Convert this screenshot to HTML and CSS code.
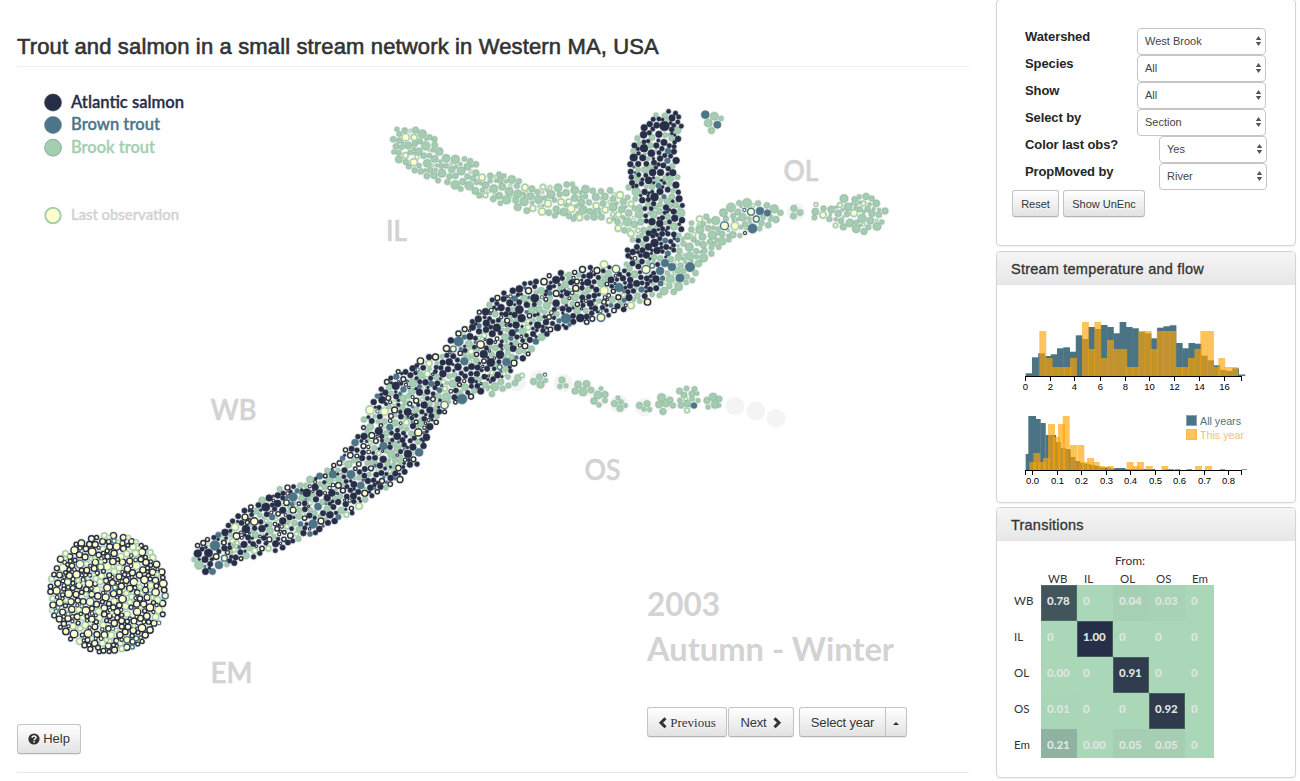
FILE: index.html
```html
<!DOCTYPE html>
<html lang="en">
<head>
<meta charset="utf-8">
<title>Trout and salmon in a small stream network</title>
<link rel="stylesheet" href="styles.css">
</head>
<body>
<div class="page">
  <main class="main">
    <h1 class="title"><span>Trout and salmon in a small stream network in Western MA, USA</span></h1>
    <svg class="network" id="network" viewBox="17 67 952 640" width="952" height="640">
      <g id="sections" class="sections"></g>
      <g id="dots"></g>
      <g class="legend">
        <circle cx="53" cy="102.5" r="8.5" fill="#262f47" stroke="#3b4152" stroke-width=".6"/>
        <circle cx="53" cy="125" r="8.5" fill="#4b7688" stroke="#63818d" stroke-width=".6"/>
        <circle cx="53" cy="147.7" r="8.4" fill="#a3cfb0" stroke="#7f9d8a" stroke-width=".8"/>
        <circle cx="53" cy="215.5" r="7.7" fill="#ffffcc" stroke="#a3cfb0" stroke-width="2"/>
        <text class="key" x="71" y="107.5" textLength="113" lengthAdjust="spacingAndGlyphs" fill="#262f47" stroke="#262f47">Atlantic salmon</text>
        <text class="key" x="71" y="130" textLength="89" lengthAdjust="spacingAndGlyphs" fill="#4b7688" stroke="#4b7688">Brown trout</text>
        <text class="key" x="71" y="152.5" textLength="84" lengthAdjust="spacingAndGlyphs" fill="#a3cfb0" stroke="#a3cfb0">Brook trout</text>
        <text class="key last" x="71" y="220" textLength="108" lengthAdjust="spacingAndGlyphs" stroke="#d3d3d3">Last observation</text>
      </g>
      <g class="river">
        <text x="386" y="241" textLength="21" lengthAdjust="spacingAndGlyphs">IL</text>
        <text x="783.500" y="181" textLength="35" lengthAdjust="spacingAndGlyphs">OL</text>
        <text x="210.500" y="420" textLength="46" lengthAdjust="spacingAndGlyphs">WB</text>
        <text x="584.5" y="480" textLength="36" lengthAdjust="spacingAndGlyphs">OS</text>
        <text x="210.500" y="683" textLength="42" lengthAdjust="spacingAndGlyphs">EM</text>
      </g>
      <g class="season">
        <text x="647" y="616" textLength="73" lengthAdjust="spacingAndGlyphs">2003</text>
        <text x="647" y="661" textLength="247" lengthAdjust="spacingAndGlyphs">Autumn - Winter</text>
      </g>
    </svg>
    <div class="controls">
      <button class="btn help"><svg width="12" height="12" viewBox="0 0 12 12"><circle cx="6" cy="6" r="5.6" fill="#333"/><path d="M4.100 4.700C4.100 2.400 8 2.400 8 4.600C8 6 6.100 5.800 6.100 7.200M6.100 8.100V9.600" fill="none" stroke="#f6f6f6" stroke-width="1.500"/></svg>Help</button>
      <div class="nav">
        <button class="btn prev"><svg width="9" height="12" viewBox="0 0 9 12"><path d="M7.500 1.200L3 5.700L7.500 10.200" fill="none" stroke="#333" stroke-width="3"/></svg>Previous</button>
        <button class="btn next">Next<svg width="9" height="12" viewBox="0 0 9 12"><path d="M1.500 1.200L6 5.700L1.500 10.200" fill="none" stroke="#333" stroke-width="3"/></svg></button>
        <div class="group"><button class="btn year">Select year</button><button class="btn caret"><i></i></button></div>
      </div>
    </div>
    <hr class="rule">
  </main>
  <aside class="side">
    <section class="panel filters">
      <div class="row"><label>Watershed</label><div class="select">West Brook<svg width="7" height="10" viewBox="0 0 7 10"><path d="M3.500 0L6.200 4H.8zM3.500 10L6.200 6H.8z"/></svg></div></div>
      <div class="row"><label>Species</label><div class="select">All<svg width="7" height="10" viewBox="0 0 7 10"><path d="M3.500 0L6.200 4H.8zM3.500 10L6.200 6H.8z"/></svg></div></div>
      <div class="row"><label>Show</label><div class="select">All<svg width="7" height="10" viewBox="0 0 7 10"><path d="M3.500 0L6.200 4H.8zM3.500 10L6.200 6H.8z"/></svg></div></div>
      <div class="row"><label>Select by</label><div class="select">Section<svg width="7" height="10" viewBox="0 0 7 10"><path d="M3.500 0L6.200 4H.8zM3.500 10L6.200 6H.8z"/></svg></div></div>
      <div class="row"><label>Color last obs?</label><div class="select narrow">Yes<svg width="7" height="10" viewBox="0 0 7 10"><path d="M3.500 0L6.200 4H.8zM3.500 10L6.200 6H.8z"/></svg></div></div>
      <div class="row"><label>PropMoved by</label><div class="select narrow">River<svg width="7" height="10" viewBox="0 0 7 10"><path d="M3.500 0L6.200 4H.8zM3.500 10L6.200 6H.8z"/></svg></div></div>
      <div class="actions"><button class="btn small reset">Reset</button><button class="btn small unenc">Show UnEnc</button></div>
    </section>
    <section class="panel flow">
      <h2 class="head">Stream temperature and flow</h2>
      <svg id="hist" class="hist" width="298" height="217" viewBox="997 285 298 217">
        <g id="bars"></g>
        <g id="axes" class="axes"></g>
        <rect x="1186.500" y="415.500" width="10" height="10" fill="#4a7384" stroke="#8aa5af"/>
        <rect x="1186.500" y="429.500" width="10" height="10" fill="#fdc45c" stroke="#f5b94c"/>
        <text class="hkey" x="1200" y="425" textLength="41" lengthAdjust="spacingAndGlyphs" fill="#4a7384">All years</text>
        <text class="hkey" x="1200" y="439" textLength="44" lengthAdjust="spacingAndGlyphs" fill="#fbc069">This year</text>
      </svg>
    </section>
    <section class="panel trans">
      <h2 class="head">Transitions</h2>
      <div class="from">From:</div>
      <div class="matrix" id="matrix"></div>
    </section>
  </aside>
</div>
<script src="main.js"></script>
</body>
</html>
```
FILE: styles.css
```css
* { box-sizing: border-box; }
body { margin: 0; background: #fff; color: #333; font: 13px/18px "Liberation Sans", Arial, sans-serif; overflow: hidden; }
.page { display: flex; width: 1300px; height: 781px; padding-left: 17px; overflow: hidden; }
.main { width: 952px; margin-right: 27px; }
.title { margin: 0; height: 67px; padding-top: 32px; border-bottom: 1px solid #eee; font-size: 22px; line-height: 30px; font-weight: 400; -webkit-text-stroke: .6px #333; white-space: nowrap; letter-spacing: .14px; }
.network { display: block; overflow: visible; }
.sections { fill: #f4f4f4; }
.network text { font-family: Lato, sans-serif; }
.network .key { font-size: 16.500px; font-weight: 600; stroke-width: .3px; }
.network .last { font-size: 15px; fill: #d3d3d3; }
.river text { font-size: 29.500px; font-weight: 600; fill: #d3d3d3; stroke: #d3d3d3; stroke-width: .5px; }
.season text { font-size: 33px; font-weight: 700; fill: #d3d3d3; }
.controls { display: flex; justify-content: space-between; height: 65px; }
.btn { display: inline-flex; align-items: center; justify-content: center; height: 30px; padding: 0; border: 1px solid #c4c4c4; border-bottom-color: #b3b3b3; border-radius: 3px; background: linear-gradient(#fff, #e2e2e2); box-shadow: 0 1px 1px rgba(0,0,0,.08); color: #333; font: 13px/18px "Liberation Sans", Arial, sans-serif; text-shadow: 0 1px 1px rgba(255,255,255,.75); white-space: nowrap; }
.help { width: 64px; margin-top: 17px; gap: 3px; }
.nav { display: flex; width: 322px; }
.prev { width: 80px; gap: 3px; font-family: "Liberation Serif", serif; padding-top: 1px; }
.next { width: 66px; margin-left: 1px; gap: 6px; }
.nav .next, .nav .year { padding-top: 1px; letter-spacing: -.15px; }
.group { display: flex; margin-left: 5px; }
.year { width: 87px; border-radius: 3px 0 0 3px; }
.caret { width: 22px; margin-left: -1px; border-radius: 0 3px 3px 0; }
.caret i { border: 3px solid transparent; border-top: 0; border-bottom-color: #333; margin-top: 2px; }
.rule { height: 1px; margin: 0; border: 0; background: #e8e8e8; }
.side { width: 300px; }
.panel { border: 1px solid #d4d4d4; border-radius: 4px; box-shadow: 0 1px 2px rgba(0,0,0,.06); overflow: hidden; }
.filters { height: 247px; margin-top: -1px; padding: 28px 29px 0 28px; }
.row { display: flex; justify-content: space-between; height: 27px; }
.row label { font-weight: 700; line-height: 18px; color: #262626; letter-spacing: -.1px; }
.select { position: relative; display: flex; align-items: center; justify-content: space-between; width: 129px; height: 27px; padding: 0 3px 1px 7px; border: 1px solid #c6c6c6; border-radius: 4px; background: #fff; font-size: 11px; color: #444; }
.narrow { width: 108px; left: 1px; }
.select svg { fill: #555; }
.actions { display: flex; gap: 4px; margin: 0 0 0 -13px; }
.small { height: 27px; font-size: 11px; }
.reset { width: 47px; }
.unenc { width: 82px; }
.flow { height: 252px; margin-top: 5px; }
.head { margin: 0; height: 33px; padding-left: 14px; background: linear-gradient(#f5f5f5, #e7e7e7); border-bottom: 1px solid #e4e4e4; font-size: 14.500px; line-height: 34px; font-weight: 400; -webkit-text-stroke: .3px #333; letter-spacing: .22px; }
.hist { display: block; }
.axes path { fill: none; stroke: #000; shape-rendering: crispEdges; }
.axes text { font: 9.500px "Liberation Sans", Arial, sans-serif; text-anchor: middle; fill: #000; }
.hkey { font: 11px "Liberation Sans", Arial, sans-serif; }
.trans { height: 271px; margin-top: 4px; font-family: Lato, sans-serif; }
.trans .head { font-family: "Liberation Sans", Arial, sans-serif; }
.from { margin: 12px 0 0 118px; height: 16px; line-height: 16px; font-size: 12px; }
.matrix { display: grid; grid-template: 16px repeat(4, 36px) 29px / 27px repeat(4, 36px) 29px; margin-left: 17px; font-size: 11.500px; }
.matrix span { color: #333; white-space: nowrap; }
.colhead { padding-left: 7px; line-height: 19px; }
.rowhead { line-height: 32px; }
.cell { padding-left: 6px; line-height: 32px; font-weight: 900; font-size: 11.500px; }
.matrix .cell { color: #dfe5e0; }
.dark { box-shadow: inset 0 0 0 1px rgba(90,120,110,.6); }
```
FILE: main.js
```js
const NS = 'http://www.w3.org/2000/svg';
function el(parent, name, attrs, text) {
  const e = document.createElementNS(NS, name);
  for (const k in attrs) e.setAttribute(k, attrs[k]);
  if (text !== undefined) e.textContent = text;
  parent.appendChild(e);
  return e;
}
let seed = 20031;
function rnd() {
  seed = (seed + 0x6D2B79F5) | 0;
  let t = Math.imul(seed ^ (seed >>> 15), 1 | seed);
  t = (t + Math.imul(t ^ (t >>> 7), 61 | t)) ^ t;
  return ((t ^ (t >>> 14)) >>> 0) / 4294967296;
}
const COLORS = { s: '#262f47', b: '#4b7688', g: '#a3cfb0' };
const EDGE = { s: '#262f47', b: '#44697a', g: '#86b295' };
const placed = [];
const grid = {};
function clash(x, y, r, slack) {
  const cx = Math.floor(x / 12), cy = Math.floor(y / 12);
  for (let i = cx - 1; i <= cx + 1; i++) for (let j = cy - 1; j <= cy + 1; j++) {
    for (const c of grid[i + ',' + j] || []) {
      if (Math.hypot(c.x - x, c.y - y) < c.r + r - slack) return true;
    }
  }
  return false;
}
function add(x, y, r, kind, last) {
  const c = { x, y, r, kind, last };
  placed.push(c);
  const k = Math.floor(x / 12) + ',' + Math.floor(y / 12);
  (grid[k] = grid[k] || []).push(c);
}
function inside(p, x, y) {
  let hit = false;
  for (let i = 0, j = p.length - 1; i < p.length; j = i++) {
    const [a, b] = p[i], [c, d] = p[j];
    if ((b > y) !== (d > y) && x < (c - a) * (y - b) / (d - b) + a) hit = !hit;
  }
  return hit;
}
function edge(p, x, y) {
  let m = 99;
  for (let i = 0, j = p.length - 1; i < p.length; j = i++) {
    const [a, b] = p[i], [c, d] = p[j];
    const t = Math.max(0, Math.min(1, ((x - a) * (c - a) + (y - b) * (d - b)) / ((c - a) ** 2 + (d - b) ** 2)));
    m = Math.min(m, Math.hypot(x - a - t * (c - a), y - b - t * (d - b)));
  }
  return m;
}
// Fills an outline with packed fish, largest first; the smallest stay off the rim.
function pack(outline, passes, pick, slack) {
  const xs = outline.map(p => p[0]), ys = outline.map(p => p[1]);
  const x0 = Math.min(...xs), y0 = Math.min(...ys), w = Math.max(...xs) - x0, h = Math.max(...ys) - y0;
  for (const [r0, density] of passes) {
    const n = w * h * density;
    for (let i = 0; i < n; i++) {
      const x = x0 + rnd() * w, y = y0 + rnd() * h, r = r0 + (rnd() - .5) * .4;
      if (!inside(outline, x, y) || edge(outline, x, y) < (r < 2.250 ? 4.5 : r - .9) || clash(x, y, r, slack)) continue;
      const [kind, last] = pick(x, y, r);
      add(x, y, r, kind, last);
    }
  }
}

// Individually placed fish: x, y, radius, species, last observation
`705.3,114.7,4,b 714.3,116.3,4,g 721,118.5,2.4,g 708.3,123,4,g 717.3,124.7,3.700,b 711.5,130.5,3.2,g
794,208.500,3.2,g 800,212.500,3,g 793.500,216,3,g
724.5,225.700,4.5,b,1 751,211.700,4,b,1 760,211,4,b 767.500,213,3.300,b 756.300,219,3.500,b,1 752.500,228.500,4.700,b 745,233,1.900,s,1 744.300,210,2,b,1 747,203,4.500,g 731,207.500,4.5,g
823,215,3.5,g,1 835.500,225.500,2.500,g,1 840,205,2.800,g,1 854,213,3.800,g,1 863.500,203.500,2.800,g,1 816,204.500,2.300,g,1 844,198.500,4,g 866,196.500,3.300,g 848,207,4,g 877,226.500,4,g 850,223,4,g 885,211,3.200,g 864,231.500,3.200,g
690,267,4.800,b 680,278,4.200,b 672,267,4,b 665,263,4,b 664.500,126,5,s 668,151,3,b
646,269.500,4.500,b,1 604,264.500,4,g,1 582.500,269.500,3.500,s,1 597,270.500,3.500,s,1 604,290.500,4.500,g,1 566,318.500,5,b 601,317.500,4.300,b,1 647.500,302,3.700,s,1 544,281.700,3.700,s,1 619,287.500,4.500,b 631,305.500,3.700,g,1 616,269,4.200,b,1
458.500,341.500,4.800,b 446.500,348.500,3.600,s,1 420.500,361,3.700,s,1 435.500,357,3.600,s,1 429,363.500,3.500,g,1 444.500,405,4.200,b,1 462,399,5,b 471,396.500,3,s,1 370,410,4.500,g,1 384.500,411.500,4.200,g,1 514,363,3.500,s,1
215,545.500,5,b 208.500,553,4.200,s 199,565,4.300,g 219,565,4,b 205.500,571.500,3.300,s 212.500,571.500,3.200,b 293,497,4.500,b 351,474.500,4.200,b 313,524,4.500,b 236.500,536,3.800,s,1 321,521,3.500,s,1 235,527,4,g,1 400,479.500,3.500,s,1 359,506,3.700,g,1
482,177.500,3.700,g,1 525,187.500,3.700,g,1 543,187,3,g,1 548,203.500,3.800,g,1 561,202,3.500,g,1 542,211.500,3.800,g,1 620,195,3.800,g,1 631,204,3,g,1 631,233.500,3.500,g,1
391.500,454,4,g 518,378,3.400,g 522,375.500,2.600,g,1 515,383,3,g 508,377,2.400,g
533.500,381.500,3.200,g 539.500,377,3.200,g 540.500,384.500,3.700,g 545.500,380.500,2.200,g 545,374.700,2,b,1
562,380,3.200,g 560,386.300,2.400,g 566,385.700,2.200,g
578,384.500,3.500,g 586.500,384,3.500,g 575,391,3.200,g 583,391.500,4.200,g 591,390,3,g 598,395,4,g 601,388.500,2,g 605,394.500,3.200,g 594,401,3.300,g 599,405,2.300,g 605,400.500,2.500,g
618,398,2.200,g 614.500,403.500,3.200,g 621,402,2.500,g 620,408.300,3.300,g 625.500,405.500,2.100,g
639.500,405.500,3.200,g 647,403.700,3.200,g 644,409.300,2.200,g 649.500,409.500,2.300,g
661.500,397.500,4,g 659,404.500,3.500,g 666,403,4,g 670,400,3,g 673,405.500,2.700,g 663,411.500,3.200,g
679.500,391,3,g 686.500,388.500,2.500,g 694.500,389,2.600,g 684,395,3,g 692,394,3,g 697,393.500,2,g 680,400.500,2.500,g 686,399,2,g,1 690,405,2,g 698,400.500,2.200,g 681,405.500,2.800,g 687,403.500,3.500,g 694,405.500,3,b 687,410.300,2.800,g,1 692,399,2.500,g
707,400.500,3.200,g 713,397,3.800,g 719,399,3,g 708,407,2.200,g 715,404.500,3.800,g 719,405.500,1.900,g`.trim().split(/\s+/).forEach(t => {
  const [x, y, r, k, l] = t.split(',');
  add(+x, +y, +r, k, !!l);
});

const IL = [[396,124],[420,124],[436,137],[448,152],[460,156],[478,161],[482,172],[498,172],[513,176],[527,183],[550,186],[573,181],[583,186],[610,187],[623,191],[634,199],[648,200],[648,240],[630,242],[618,235],[605,220],[575,221],[550,217],[517,211],[483,199],[460,192],[437,182],[411,172],[394,160],[390,143]];
const TRUNK = [[647,119],[656,113],[670,109],[683,115],[684,123],[679,145],[679,175],[681,192],[684,205],[685,225],[679,242],[670,262],[664,280],[657,296],[632,306],[618,300],[616,276],[624,266],[624,250],[641,236],[645,220],[642,206],[630,200],[626,185],[627,160],[632,141]];
const OL = [[676,238],[690,222],[702,214],[715,213],[727,206],[745,198],[757,201],[775,204],[783,210],[781,220],[765,231],[755,233],[735,239],[722,247],[712,256],[702,264],[698,276],[690,286],[678,293],[655,299],[652,280],[666,262]];
const WB = [[193,550],[200,538],[212,536],[221,527],[235,515],[255,500],[275,490],[283,484],[292,485],[305,478],[320,470],[335,462],[342,450],[355,437],[362,428],[362,415],[368,400],[378,388],[394,371],[420,358],[440,350],[452,332],[468,321],[478,308],[490,298],[508,289],[530,280],[545,275],[560,270],[580,268],[600,263],[622,262],[630,270],[655,286],[655,298],[632,308],[615,315],[590,323],[565,332],[550,333],[537,350],[520,364],[508,378],[502,392],[480,394],[460,400],[443,416],[433,431],[426,450],[420,464],[405,480],[385,490],[370,500],[358,512],[345,518],[325,530],[305,540],[285,550],[262,555],[245,563],[225,568],[210,575],[198,572],[192,560]];
const OLEND = [[812,203],[820,203],[827,207],[834,203],[841,194],[848,198],[858,195],[866,192],[874,198],[882,200],[883,206],[888,210],[885,218],[880,231],[868,229],[864,235],[850,230],[840,231],[832,226],[823,218],[816,224],[811,215]];
const OSTOP = [[478,382],[500,378],[510,376],[511,388],[496,397],[486,396]];
const dense = [[4.100,.001],[3.500,.009],[2.900,.05],[2.450,.25],[2,.5],[1.600,.6]];
const loose = [[4.100,.006],[3.400,.025],[2.800,.1],[2.400,.15],[1.900,.2],[1.500,.15]];
pack(TRUNK, dense, (x, y, r) => {
  const u = rnd();
  const ps = x < 641 && y > 190 && y < 235 ? .25 : .7;
  return [u < ps ? 's' : u < ps + .04 ? 'b' : 'g', y > 255 && rnd() < .06];
}, .3);
pack(IL, loose, (x, y, r) => ['g', rnd() < (r < 2.1 ? .3 : x > 520 ? .15 : .05)], .2);
pack(OL, loose, (x, y, r) => [rnd() < .02 ? 'b' : 'g', rnd() < (r < 2.300 ? .35 : .08)], .2);
pack(OLEND, loose, (x, y, r) => ['g', rnd() < (r < 2.1 ? .4 : .02)], .1);
pack(OSTOP, loose, () => ['g', rnd() < .2], .1);
pack(WB, dense, (x, y, r) => {
  const u = rnd(), mid = Math.min(1, edge(WB, x, y) / 30);
  const ps = .8 - mid * .32;
  return [u < ps ? 's' : u < ps + .09 ? 'b' : 'g', rnd() < (r < 2.300 ? .34 : .2)];
}, .3);
const em = [];
for (let i = 0; i < 40; i++) em.push([108 + 61 * Math.cos(i * Math.PI / 20), 593 + 61 * Math.sin(i * Math.PI / 20)]);
pack(em, [[4.200,.003],[3.600,.04],[3.100,.1],[2.600,.3],[2.100,.5]], (x, y, r) => {
  const u = rnd(), d = Math.hypot(x - 108, y - 593), ps = d < 25 ? .62 : .72;
  return [u < ps ? 's' : u < ps + .05 ? 'b' : 'g', true];
}, 1.200);

const sections = document.getElementById('sections');
[[517,382],[539,379],[563,383],[583,388],[599,397],[619,404],[644,407],[665,403],[687,400],[713,401],[735,406],[756,411],[776,418],[796,212]].forEach(([x, y]) => el(sections, 'circle', { cx: x, cy: y, r: 9.300 }));
placed.forEach(c => el(sections, 'circle', { cx: c.x.toFixed(1), cy: c.y.toFixed(1), r: (c.r + 1).toFixed(1), fill: '#e0e3e6' }));
const dots = document.getElementById('dots');
placed.forEach(c => {
  const w = c.last ? (c.r < 2.300 ? 1.100 : 1.400) : .6;
  el(dots, 'circle', { cx: c.x.toFixed(1), cy: c.y.toFixed(1), r: (c.r - w / 2 + .15).toFixed(2), fill: c.last ? '#ffffcc' : COLORS[c.kind], stroke: c.last ? COLORS[c.kind] : EDGE[c.kind], 'stroke-width': w });
});

// Histograms
const bars = document.getElementById('bars');
const axes = document.getElementById('axes');
const TEAL = '#4a7384', ORANGE = 'rgba(255,165,0,.65)';
function bar(x, w, h, base, fill) {
  el(bars, 'rect', { x, y: base - h, width: w, height: h, fill });
}
[2.700,18.700,22.700,20,21.700,27.700,28.700,24.300,40.700,37,49,47,51,49,42.700,54,49,47.700,44.300,42.700,37.700,48.300,49.700,50.700,33,27.700,33,32.300,20.300,15.700,10.700,6,5,7.700,1.500].forEach((h, i) => bar(1025.700 + i * 6.260, 6.700, h, 376, TEAL));
[[148,45],[167,18],[186,9],[205,9],[223,9],[240,18],[276,54],[295,27],[313,54],[332,18],[351,36],[371,27],[391,27],[409,9],[427,9],[445,45],[464,45],[482,27],[500,45],[519,45],[538,45],[558,9],[576,9],[594,18],[613,27],[631,45],[651,45],[671,9],[685,18],[704,9],[724,9]].forEach(([x, h]) => bar(990 + x / 3, 6.900, h, 376, ORANGE));
[[107,16],[115,54],[122,54],[136,51],[151,47],[167,35],[182,35],[196,28],[211,22],[226,21],[240,13],[255,9],[270,7],[285,6],[300,5],[315,4],[330,2.500],[345,2.500],[360,1.600],[375,2],[390,2],[405,1],[420,1],[435,1],[450,1],[465,1],[480,1],[520,.7],[535,.7],[555,.7],[590,.7],[690,.7],[755,.7]].forEach(([x, h]) => bar(990 + x / 3, 5.400, h, 470, TEAL));
[[118,8],[130,17],[145,8],[159,12],[174,46],[189,33],[204,46],[218,54],[240,25],[262,25],[276,8],[291,12],[308,8],[325,4],[350,4],[410,8],[427,4],[441,8],[467,4],[514,4],[615,4],[645,4]].forEach(([x, h]) => bar(990 + x / 3, 7, h, 470, ORANGE));
function axis(y, ticks) {
  el(axes, 'path', { d: 'M1025.500 ' + (y + 5) + 'V' + (y + .5) + 'H1241.500V' + (y + 5) });
  ticks.forEach(([x, t]) => {
    el(axes, 'path', { d: 'M' + x + ' ' + y + 'v5' });
    el(axes, 'text', { x, y: y + 14 }, t);
  });
}
axis(376, [[1025.500,0],[1050.500,2],[1074.500,4],[1100.500,6],[1125.500,8],[1149.500,10],[1174.500,12],[1199.500,14],[1224.500,16]]);
axis(470, ['0.0','0.1','0.2','0.3','0.4','0.5','0.6','0.7','0.8'].map((t, i) => [Math.round(1032 + i * 24.500) + .5, t]));

// Transition matrix
const matrix = document.getElementById('matrix');
function span(cls, text, bg) {
  const s = document.createElement('span');
  s.className = cls;
  s.textContent = text;
  if (bg) s.style.background = bg;
  matrix.appendChild(s);
}
const names = ['WB', 'IL', 'OL', 'OS', 'Em'];
span('', '');
names.forEach(n => span('colhead', n));
const TINT = { '0.78': '#43555c', '1.00': '#262f47', '0.91': '#313d4e', '0.92': '#2f3a4d', '0.21': '#90b2a0', '0.04': '#a6d0b4', '0.05': '#a5ceb3', '0.03': '#a8d2b6', '0.01': '#aad6b8' };
[['0.78','0','0.04','0.03','0'],['0','1.00','0','0','0'],['0.00','0','0.91','0','0'],['0.01','0','0','0.92','0'],['0.21','0.00','0.05','0.05','0']].forEach((row, i) => {
  span('rowhead', names[i]);
  row.forEach(v => span(+v > .5 ? 'cell dark' : 'cell', v, TINT[v] || '#abd7b9'));
});
```
